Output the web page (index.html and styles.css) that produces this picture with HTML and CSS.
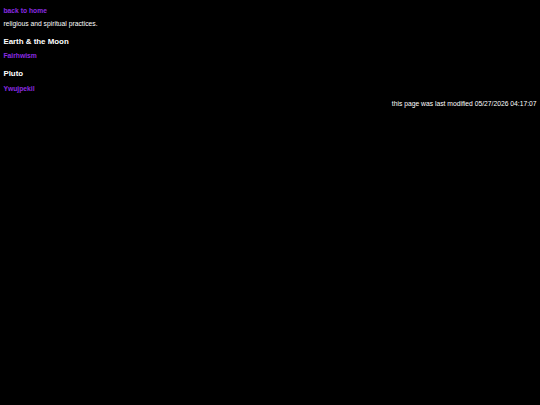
FILE: index.html
```html
<!DOCTYPE html>
<html>
<head>
<meta charset="utf-8">
<link rel="stylesheet" href="styles.css">
</head>
<body>
<a class="link" href="#">back to home</a>
<p class="desc">religious and spiritual practices.</p>
<h3 class="title">Earth &amp; the Moon</h3>
<a class="link" href="#">Fairhwism</a>
<h3 class="title">Pluto</h3>
<a class="link" href="#">Ywujpekil</a>
<p class="footer">this page was last modified 05/27/2026 04:17:07</p>
</body>
</html>
```
FILE: styles.css
```css
html, body { background: #000; }
body {
  margin: 0;
  padding: 6.7px 3.4px;
  font-family: "Liberation Sans", Arial, sans-serif;
  font-size: 6.75px;
  line-height: 8px;
  color: #fff;
}
.link {
  display: block;
  color: #8a2be2;
  font-weight: bold;
  text-decoration: none;
}
.desc { margin: 5.6px 0 0; }
.title { font-size: 7.9px; line-height: 9px; font-weight: bold; margin: 8.7px 0 6.5px; }
.footer { text-align: right; margin: 7.4px 0 0; }
```
